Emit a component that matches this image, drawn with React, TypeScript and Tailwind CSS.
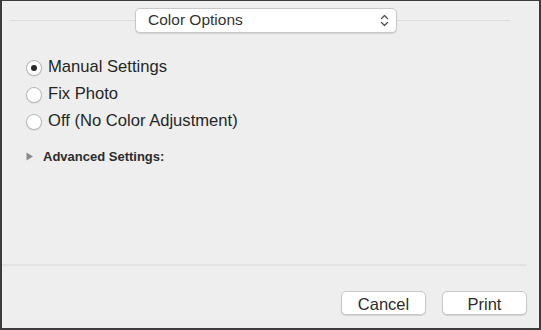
import React from "react";

function Radio({ checked, label }: { checked?: boolean; label: string }) {
  return (
    <div className="flex items-center h-[27px]">
      <div className="w-[16px] h-[16px] rounded-full bg-white border border-[#b8b8b8] shadow-[0_0.5px_1px_rgba(0,0,0,0.15)] flex items-center justify-center">
        {checked && <div className="w-[6px] h-[6px] rounded-full bg-[#2a2a2a]" />}
      </div>
      <span className="ml-[6px] text-[16.6px] text-[#262626]">{label}</span>
    </div>
  );
}

export default function App() {
  return (
    <div
      className="w-[541px] h-[330px] bg-[#eeeeee] border-l-2 border-r-2 border-t border-b-2 border-[#3c3c3c] flex flex-col"
      style={{ fontFamily: '"Liberation Sans", Arial, sans-serif' }}
    >
      <div className="flex items-center h-[32px] pt-[6px] pl-[8px]">
        <div className="w-[125px] h-px bg-[#dcdcdc]" />
        <div className="w-[262px] h-[25px] bg-white rounded-[5px] border border-[#c8c8c8] shadow-[0_1px_1px_rgba(0,0,0,0.12)] flex items-center pl-[12px] pr-[7px]">
          <span className="flex-1 text-[15.5px] text-[#333]">Color Options</span>
          <svg width="9" height="13" viewBox="0 0 9 13" fill="none" stroke="#555" strokeWidth="1.4" strokeLinecap="round" strokeLinejoin="round">
            <path d="M1.5 4.5 L4.5 1.5 L7.5 4.5" />
            <path d="M1.5 8.5 L4.5 11.5 L7.5 8.5" />
          </svg>
        </div>
        <div className="w-[113px] h-px bg-[#dcdcdc]" />
      </div>
      <div className="flex flex-col pl-[24px] pt-[21px]">
        <Radio checked label="Manual Settings" />
        <Radio label="Fix Photo" />
        <Radio label="Off (No Color Adjustment)" />
        <div className="flex items-center mt-[12px]">
          <svg width="8" height="9" viewBox="0 0 8 9" className="ml-[0px]">
            <path d="M0.5 0.5 L7 4.5 L0.5 8.5 Z" fill="#8a8a8a" />
          </svg>
          <span className="ml-[9px] text-[13px] text-[#2c2c2c] font-bold">Advanced Settings:</span>
        </div>
      </div>
      <div className="flex-1" />
      <div className="h-[2px] bg-[#e2e2e2] mr-[12px]" />
      <div className="flex justify-end gap-[16px] pr-[12px] pt-[25px] pb-[13px]">
        <button className="w-[85px] h-[24px] bg-white rounded-[5px] border border-[#c8c8c8] shadow-[0_1px_1px_rgba(0,0,0,0.12)] text-[16.5px] text-[#2c2c2c]">
          Cancel
        </button>
        <button className="w-[85px] h-[24px] bg-white rounded-[5px] border border-[#c8c8c8] shadow-[0_1px_1px_rgba(0,0,0,0.12)] text-[16.5px] text-[#2c2c2c]">
          Print
        </button>
      </div>
    </div>
  );
}
